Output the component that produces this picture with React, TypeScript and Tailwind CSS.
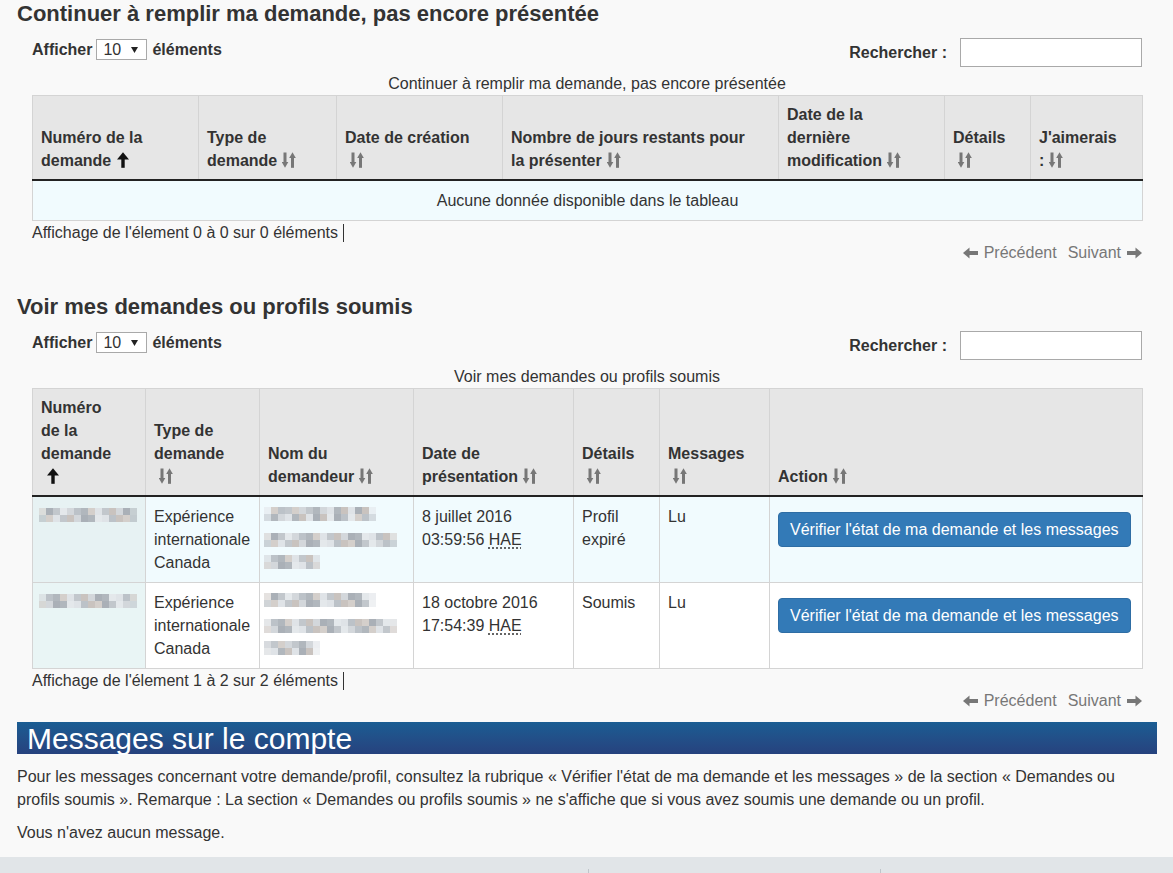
import React from "react";

const SHADES = [
  "#c2c7cc",
  "#d3d7db",
  "#b1b7bd",
  "#dfe3e7",
  "#c9c3bf",
  "#aab0b7",
  "#e4e8eb",
  "#bcc2c8",
  "#d4cfcb",
];

function Mosaic({ cols, seed }: { cols: number; seed: number }) {
  return (
    <div className="flex flex-col">
      {[0, 1].map((r) => (
        <div key={r} className="flex">
          {Array.from({ length: cols }).map((_, i) => {
            const idx = (seed * 7 + i * 5 + r * 3 + ((i * i + seed) % 4)) % SHADES.length;
            const edge = i === 0 || i === cols - 1;
            return (
              <div
                key={i}
                className="h-[7px] w-[7px]"
                style={{ backgroundColor: SHADES[idx], opacity: edge ? 0.6 : 1 }}
              />
            );
          })}
        </div>
      ))}
    </div>
  );
}

const SortIcon = () => (
  <svg className="ml-[5px] inline align-[-2px]" width="14" height="16" viewBox="0 0 14 16">
    <rect x="1.5" y="0.5" width="3" height="10.5" fill="#777" />
    <polygon points="-0.3,10 6.3,10 3,15.8" fill="#777" />
    <polygon points="7.2,6 13.8,6 10.5,0.2" fill="#777" />
    <rect x="9" y="5" width="3" height="10.8" fill="#777" />
  </svg>
);

const AscIcon = () => (
  <svg className="ml-[6px] inline align-[-2px]" width="12" height="16" viewBox="0 0 12 16">
    <polygon points="0,7.5 12,7.5 6,0.3" fill="#111" />
    <rect x="4.3" y="6" width="3.4" height="9.8" fill="#111" />
  </svg>
);

const ArrowLeft = () => (
  <svg width="15" height="12" viewBox="0 0 15 12">
    <polygon points="0,6 6.5,0.5 6.5,11.5" fill="#777" />
    <rect x="5" y="4" width="10" height="4" fill="#777" />
  </svg>
);

const ArrowRight = () => (
  <svg width="15" height="12" viewBox="0 0 15 12">
    <polygon points="15,6 8.5,0.5 8.5,11.5" fill="#777" />
    <rect x="0" y="4" width="10" height="4" fill="#777" />
  </svg>
);

function Controls() {
  return (
    <div className="flex items-start justify-between">
      <div className="flex items-center font-bold">
        <span>Afficher</span>
        <div className="ml-[4px] flex h-[21px] w-[51px] items-center justify-between border border-[#a9a9a9] bg-white pl-[6px] pr-[8px] font-normal">
          <span>10</span>
          <svg width="7" height="6" viewBox="0 0 7 6">
            <polygon points="0,0 7,0 3.5,6" fill="#222" />
          </svg>
        </div>
        <span className="ml-[5px]">éléments</span>
      </div>
      <div className="flex items-center font-bold">
        <span>Rechercher :</span>
        <input
          type="search"
          className="ml-[13px] h-[29px] w-[182px] border border-[#a9a9a9] bg-white px-2 outline-none"
        />
      </div>
    </div>
  );
}

function Footer({ info }: { info: string }) {
  return (
    <>
      <div className="flex items-center">
        <span>{info}</span>
        <span className="ml-[5px] inline-block h-[18px] w-[1px] bg-[#333]" />
      </div>
      <div className="-mt-[3px] flex items-center justify-end gap-[6px] text-[#777]">
        <ArrowLeft />
        <span>Précédent</span>
        <span className="ml-[5px]">Suivant</span>
        <ArrowRight />
      </div>
    </>
  );
}

const th =
  "border border-[#d4d4d4] border-b-2 border-b-[#222] bg-[#e6e6e6] pl-[8px] pr-[30px] pt-[7px] pb-[7px] text-left align-bottom font-bold";
const td = "border border-[#d4d4d4] p-[8px] align-top";

function TableOne() {
  const heads: [string, "asc" | "sort"][] = [
    ["Numéro de la demande", "asc"],
    ["Type de demande", "sort"],
    ["Date de création", "sort"],
    ["Nombre de jours restants pour la présenter", "sort"],
    ["Date de la dernière modification", "sort"],
    ["Détails", "sort"],
    ["J'aimerais :", "sort"],
  ];
  const widths = ["w-[166px]", "w-[138px]", "w-[166px]", "w-[276px]", "w-[166px]", "w-[86px]", "w-[112px]"];
  return (
    <table className="w-[1110px] table-fixed border-collapse">
      <colgroup>
        {widths.map((w, i) => (
          <col key={i} className={w} />
        ))}
      </colgroup>
      <thead>
        <tr>
          {heads.map(([t, k]) => (
            <th key={t} className={th}>
              {t}
              {k === "asc" ? <AscIcon /> : <SortIcon />}
            </th>
          ))}
        </tr>
      </thead>
      <tbody>
        <tr>
          <td colSpan={7} className="border border-[#d4d4d4] bg-[#f1fbfe] px-[8px] pt-[8px] pb-[8px] text-center">
            Aucune donnée disponible dans le tableau
          </td>
        </tr>
      </tbody>
    </table>
  );
}

const rows = [
  {
    seed: 1,
    date: "8 juillet 2016",
    time: "03:59:56",
    details: "Profil expiré",
    bg: "bg-[#f1fbfe]",
    sorted: "bg-[#e7f2f3]",
  },
  {
    seed: 4,
    date: "18 octobre 2016",
    time: "17:54:39",
    details: "Soumis",
    bg: "bg-white",
    sorted: "bg-[#e9f5f5]",
  },
];

function TableTwo() {
  const heads: [string, "asc" | "sort"][] = [
    ["Numéro de la demande", "asc"],
    ["Type de demande", "sort"],
    ["Nom du demandeur", "sort"],
    ["Date de présentation", "sort"],
    ["Détails", "sort"],
    ["Messages", "sort"],
    ["Action", "sort"],
  ];
  const widths = ["w-[113px]", "w-[114px]", "w-[154px]", "w-[160px]", "w-[86px]", "w-[110px]", "w-[373px]"];
  return (
    <table className="w-[1110px] table-fixed border-collapse">
      <colgroup>
        {widths.map((w, i) => (
          <col key={i} className={w} />
        ))}
      </colgroup>
      <thead>
        <tr>
          {heads.map(([t, k]) => (
            <th key={t} className={th}>
              {t}
              {k === "asc" ? <AscIcon /> : <SortIcon />}
            </th>
          ))}
        </tr>
      </thead>
      <tbody>
        {rows.map((r) => (
          <tr key={r.seed} className={r.bg}>
            <td className={`${td} ${r.sorted}`}>
              <div className="-ml-[2px] mt-[3px]">
                <Mosaic cols={14} seed={r.seed} />
              </div>
            </td>
            <td className={td}>Expérience internationale Canada</td>
            <td className={td}>
              <div className="-ml-[4px]">
                <div className="mt-[2px]">
                  <Mosaic cols={16} seed={r.seed + 2} />
                </div>
                <div className="mt-[12px]">
                  <Mosaic cols={19} seed={r.seed + 5} />
                </div>
                <div className="mt-[8px]">
                  <Mosaic cols={8} seed={r.seed + 3} />
                </div>
              </div>
            </td>
            <td className={td}>
              {r.date}
              <br />
              {r.time}{" "}
              <abbr
                title="Heure avancée de l'Est"
                className="underline decoration-dotted underline-offset-[3px]"
              >
                HAE
              </abbr>
            </td>
            <td className={td}>{r.details}</td>
            <td className={td}>Lu</td>
            <td className={td}>
              <button
                type="button"
                className="mt-[7px] h-[35px] whitespace-nowrap rounded-[4px] border border-[#2e6da4] bg-[#337ab7] px-[11px] text-white"
              >
                Vérifier l'état de ma demande et les messages
              </button>
            </td>
          </tr>
        ))}
      </tbody>
    </table>
  );
}

export default function App() {
  return (
    <div className="flex min-h-screen flex-col bg-[#f9f9f9] font-['Liberation_Sans',Arial,sans-serif] text-[16px] leading-[23px] text-[#333]">
      <main className="pl-[17px] pr-[16px]">
        <h2 className="pt-[2px] text-[22px] font-bold leading-[24px]">
          Continuer à remplir ma demande, pas encore présentée
        </h2>
        <div className="mt-[12px] px-[15px]">
          <Controls />
          <div className="mt-[5px] text-center">Continuer à remplir ma demande, pas encore présentée</div>
          <TableOne />
          <Footer info="Affichage de l'élement 0 à 0 sur 0 éléments" />
        </div>

        <h2 className="mt-[31px] text-[22px] font-bold leading-[24px]">Voir mes demandes ou profils soumis</h2>
        <div className="mt-[12px] px-[15px]">
          <Controls />
          <div className="mt-[5px] text-center">Voir mes demandes ou profils soumis</div>
          <TableTwo />
          <Footer info="Affichage de l'élement 1 à 2 sur 2 éléments" />
        </div>

        <h2 className="mt-[10px] h-[32px] bg-linear-to-b from-[#1a5d93] to-[#26427e] pl-[10px] text-[30px] leading-[33px] text-white">
          Messages sur le compte
        </h2>
        <p className="mt-[11px]">
          Pour les messages concernant votre demande/profil, consultez la rubrique « Vérifier l'état de ma demande et
          les messages » de la section « Demandes ou profils soumis ». Remarque : La section « Demandes ou profils
          soumis » ne s'affiche que si vous avez soumis une demande ou un profil.
        </p>
        <p className="mt-[10px]">Vous n'avez aucun message.</p>
      </main>

      <footer className="mt-[13px] flex-1 bg-[#e1e5e8]">
        <div className="flex pt-[12px]">
          <div className="w-[588px]" />
          <div className="h-[40px] w-[292px] border-l border-[#bfc5ca]" />
          <div className="h-[40px] flex-1 border-l border-[#bfc5ca]" />
        </div>
      </footer>
    </div>
  );
}
